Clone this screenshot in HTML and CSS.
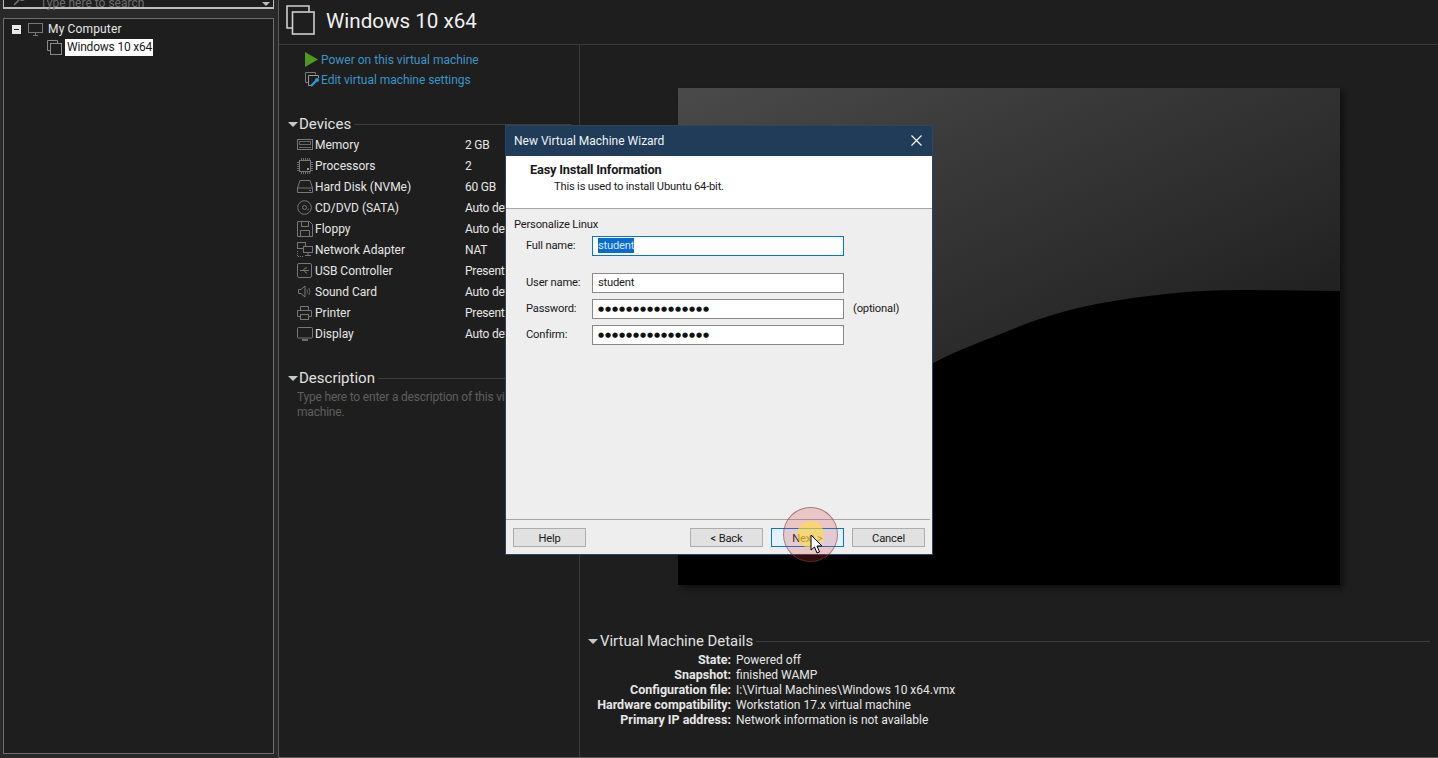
FILE: index.html
```html
<!DOCTYPE html>
<html lang="en">
<head>
    <meta charset="UTF-8">
    <title>Windows 10 x64 - VMware Workstation</title>
    <link rel="stylesheet" href="styles.css">
</head>
<body>
    <aside class="sidebar">
        <div class="search">
            <svg class="search-icon" width="16" height="12" viewBox="0 0 16 12"><circle cx="10" cy="1" r="4.5" fill="none" stroke="#777"/><path d="M7 5 L2 10" stroke="#777" stroke-width="1.5"/></svg>
            <span class="search-text">Type here to search</span>
            <span class="search-arrow"></span>
        </div>
        <div class="tree">
            <div class="tree-row">
                <span class="expander"></span>
                <svg class="tree-pc" width="15" height="13" viewBox="0 0 15 13"><rect x="0.5" y="0.5" width="14" height="9" fill="none" stroke="#777"/><path d="M5 12.5 H10 M7.5 10 V12" stroke="#777"/></svg>
                <span class="tree-label">My Computer</span>
            </div>
            <div class="tree-row child">
                <svg width="15" height="15" viewBox="0 0 15 15"><path d="M3.5 10.5 H0.5 V0.5 H10.5 V3.5" fill="none" stroke="#8a8a8a"/><rect x="3.5" y="3.5" width="11" height="11" fill="none" stroke="#8a8a8a"/></svg>
                <span class="tree-selected">Windows 10 x64</span>
            </div>
        </div>
    </aside>

    <main class="main">
        <header class="vm-header">
            <svg width="29" height="30" viewBox="0 0 29 30"><path d="M6.5 23 H1 V1 H23 V6.5" fill="none" stroke="#cfcfcf" stroke-width="1.6"/><rect x="6.5" y="7" width="21.5" height="22" fill="none" stroke="#cfcfcf" stroke-width="1.6"/></svg>
            <h1>Windows 10 x64</h1>
        </header>
        <div class="vm-body">
            <section class="summary">
                <div class="action">
                    <svg width="13" height="15" viewBox="0 0 13 15"><path d="M0 0 L13 7.5 L0 15 Z" fill="#4f9a1c"/></svg>
                    <a>Power on this virtual machine</a>
                </div>
                <div class="action second">
                    <svg width="15" height="15" viewBox="0 0 15 15"><path d="M3 10.5 H0.5 V0.5 H10.5 V2.5" fill="none" stroke="#777"/><path d="M6 13.5 H3.5 V3.5 H13.5 V6" fill="none" stroke="#999"/><path d="M6 14 L11 9" stroke="#2c9bd6" stroke-width="2.4"/><circle cx="12" cy="8" r="2" fill="#2c9bd6"/></svg>
                    <a>Edit virtual machine settings</a>
                </div>

                <h2 class="section-head devices"><span class="caret"></span><span>Devices</span></h2>
                <ul class="devices-list">
                    <li>
                        <svg viewBox="0 0 16 12" width="16" height="12"><rect x="0.5" y="0.5" width="15" height="10" fill="none" stroke="#777"/><rect x="2.5" y="2.5" width="11" height="3" fill="none" stroke="#666"/><path d="M2 8.5 H14" stroke="#666"/></svg>
                        <span class="dev-name">Memory</span><span class="dev-value">2 GB</span>
                    </li>
                    <li>
                        <svg viewBox="0 0 16 16" width="16" height="16"><rect x="2.5" y="2.5" width="11" height="11" fill="none" stroke="#777"/><path d="M4.5 0 V2 M6.5 0 V2 M8.5 0 V2 M10.5 0 V2 M12.5 0 V2 M4.5 14 V16 M6.5 14 V16 M8.5 14 V16 M10.5 14 V16 M12.5 14 V16 M0 4.5 H2 M0 6.5 H2 M0 8.5 H2 M0 10.5 H2 M0 12.5 H2 M14 4.5 H16 M14 6.5 H16 M14 8.5 H16 M14 10.5 H16 M14 12.5 H16" stroke="#6a6a6a"/><rect x="10" y="10" width="2" height="2" fill="#999"/></svg>
                        <span class="dev-name">Processors</span><span class="dev-value">2</span>
                    </li>
                    <li>
                        <svg viewBox="0 0 16 13" width="16" height="13"><path d="M3 0.5 H13 L15.5 8 V12.5 H0.5 V8 Z M0.5 8 H15.5" fill="none" stroke="#777"/><path d="M12 10.5 H14" stroke="#777"/></svg>
                        <span class="dev-name">Hard Disk (NVMe)</span><span class="dev-value">60 GB</span>
                    </li>
                    <li>
                        <svg viewBox="0 0 15 15" width="15" height="15"><circle cx="7.5" cy="7.5" r="6.8" fill="none" stroke="#777"/><circle cx="7.5" cy="7.5" r="2" fill="none" stroke="#777"/><path d="M10 10 L12 9" stroke="#666"/></svg>
                        <span class="dev-name">CD/DVD (SATA)</span><span class="dev-value">Auto detect</span>
                    </li>
                    <li>
                        <svg viewBox="0 0 16 16" width="16" height="16"><path d="M0.5 0.5 H12.5 L15.5 3.5 V15.5 H0.5 Z" fill="none" stroke="#777"/><path d="M4.5 0.5 V5.5 H11.5 V0.5 M3.5 15.5 V9.5 H12.5 V15.5" fill="none" stroke="#777"/></svg>
                        <span class="dev-name">Floppy</span><span class="dev-value">Auto detect</span>
                    </li>
                    <li>
                        <svg viewBox="0 0 16 15" width="16" height="15"><rect x="0.5" y="0.5" width="8" height="6" fill="none" stroke="#777"/><rect x="6.5" y="4.5" width="9" height="6" fill="#1e1e1e" stroke="#777"/><path d="M11 11 V13 M8 13.5 H14" stroke="#777"/><path d="M0.5 9 V14.5 H6" fill="none" stroke="#777" stroke-dasharray="1 1"/></svg>
                        <span class="dev-name">Network Adapter</span><span class="dev-value">NAT</span>
                    </li>
                    <li>
                        <svg viewBox="0 0 15 15" width="15" height="15"><rect x="0.5" y="0.5" width="14" height="14" rx="1.5" fill="none" stroke="#777"/><path d="M3 7.5 H12 M6 7.5 L8 5 H10 M7 7.5 L9 10 H10" fill="none" stroke="#777"/></svg>
                        <span class="dev-name">USB Controller</span><span class="dev-value">Present</span>
                    </li>
                    <li>
                        <svg viewBox="0 0 15 13" width="15" height="13"><path d="M1.5 4.5 H4 L8 1 V12 L4 8.5 H1.5 Z" fill="none" stroke="#777"/><path d="M10 4.5 Q11 6.5 10 8.5 M12 3 Q13.5 6.5 12 10" fill="none" stroke="#666"/></svg>
                        <span class="dev-name">Sound Card</span><span class="dev-value">Auto detect</span>
                    </li>
                    <li>
                        <svg viewBox="0 0 15 14" width="15" height="14"><path d="M3.5 4.5 V0.5 H11.5 V4.5" fill="none" stroke="#777"/><path d="M3 10.5 H0.5 V4.5 H14.5 V10.5 H12" fill="none" stroke="#777"/><rect x="3.5" y="8.5" width="8" height="5" fill="none" stroke="#777"/></svg>
                        <span class="dev-name">Printer</span><span class="dev-value">Present</span>
                    </li>
                    <li>
                        <svg viewBox="0 0 16 14" width="16" height="14"><rect x="0.5" y="0.5" width="15" height="10.5" rx="1" fill="none" stroke="#777"/><path d="M5 13 H11" stroke="#888" stroke-width="1.5"/></svg>
                        <span class="dev-name">Display</span><span class="dev-value">Auto detect</span>
                    </li>
                </ul>

                <h2 class="section-head description"><span class="caret"></span><span>Description</span></h2>
                <p class="description-text">Type here to enter a description of this virtual machine.</p>
            </section>

            <section class="preview-pane">
                <div class="preview">
                    <svg class="wave" width="662" height="497" viewBox="0 0 662 497"><path d="M0 330 L200 330 Q225 295 255 275 C280 262 300 255 325 245 C360 230 400 218 442 212 C480 206 520 202 560 202 L662 203 V497 H0 Z" fill="#000"/></svg>
                </div>
                <h2 class="section-head details-head"><span class="caret"></span><span>Virtual Machine Details</span></h2>
                <dl class="details">
                    <dt>State:</dt><dd>Powered off</dd>
                    <dt>Snapshot:</dt><dd>finished WAMP</dd>
                    <dt>Configuration file:</dt><dd>I:\Virtual Machines\Windows 10 x64.vmx</dd>
                    <dt>Hardware compatibility:</dt><dd>Workstation 17.x virtual machine</dd>
                    <dt>Primary IP address:</dt><dd>Network information is not available</dd>
                </dl>
            </section>
        </div>
    </main>

    <div class="wizard">
        <div class="wizard-title">
            <span>New Virtual Machine Wizard</span>
            <svg width="11" height="11" viewBox="0 0 11 11"><path d="M0.5 0.5 L10.5 10.5 M10.5 0.5 L0.5 10.5" stroke="#fff" stroke-width="1.1"/></svg>
        </div>
        <div class="wizard-top">
            <div class="wizard-heading">Easy Install Information</div>
            <div class="wizard-sub">This is used to install Ubuntu 64-bit.</div>
        </div>
        <div class="wizard-body">
            <div class="group-label">Personalize Linux</div>
            <div class="field focused"><label>Full name:</label><div class="input"><span class="selected">student</span></div></div>
            <div class="field spaced"><label>User name:</label><div class="input">student</div></div>
            <div class="field"><label>Password:</label><div class="input dots">●●●●●●●●●●●●●●●●</div><span class="optional">(optional)</span></div>
            <div class="field"><label>Confirm:</label><div class="input dots">●●●●●●●●●●●●●●●●</div></div>
        </div>
        <div class="wizard-footer">
            <button class="btn">Help</button>
            <button class="btn back">&lt; Back</button>
            <button class="btn primary">Next &gt;</button>
            <button class="btn">Cancel</button>
        </div>
    </div>

    <div class="click-ring"><div class="click-dot"></div></div>
    <svg class="cursor" width="13" height="21" viewBox="0 0 13 21"><path d="M1 1 V16 L4.5 13 L7 19 L9.5 18 L7 12 H12 Z" fill="#fff" stroke="#000"/></svg>
</body>
</html>
```

FILE: styles.css
```css
* {
    box-sizing: border-box;
}

body {
    margin: 0;
    width: 1438px;
    height: 758px;
    overflow: hidden;
    display: flex;
    background: #292929;
    color: #e6e6e6;
    font-family: Roboto, "Noto Sans", sans-serif;
    font-size: 12px;
}

/* left tree */
.sidebar {
    width: 278px;
    flex: none;
    padding: 0 4px 4px 3px;
    display: flex;
    flex-direction: column;
}

.search {
    height: 21px;
    margin-top: -12px;
    flex: none;
    display: flex;
    align-items: flex-end;
    position: relative;
    background: #1e1e1e;
    border: 1px solid #bdbdbd;
    border-top: none;
    border-bottom-width: 2px;
    padding-left: 36px;
    color: #6e6e6e;
}

.search-icon {
    position: absolute;
    left: 8px;
    bottom: 0;
}

.search-text {
    line-height: 14px;
    margin-bottom: -3px;
}

.search-arrow {
    position: absolute;
    right: 3px;
    bottom: 1px;
    border-left: 4px solid transparent;
    border-right: 4px solid transparent;
    border-top: 4px solid #bbb;
}

.tree {
    flex: 1;
    margin-top: 9px;
    background: #1e1e1e;
    border: 1px solid #6e6e6e;
    padding: 1px 0 0 8px;
}

.tree-row {
    display: flex;
    align-items: center;
    height: 18px;
}

.expander {
    width: 9px;
    height: 9px;
    background: #e8e8e8;
    position: relative;
    margin-right: 7px;
}

.expander::after {
    content: "";
    position: absolute;
    left: 2px;
    right: 2px;
    top: 4px;
    height: 1px;
    background: #222;
}

.tree-pc {
    margin-right: 5px;
}

.tree-label {
    letter-spacing: 0.15px;
}

.tree-row.child {
    padding-left: 35px;
}

.tree-row.child svg {
    margin-right: 3px;
}

.tree-selected {
    background: #fff;
    color: #1a1a1a;
    padding: 0 1px 0 2px;
    line-height: 17px;
    letter-spacing: -0.2px;
}

/* main area */
.main {
    flex: 1;
    display: flex;
    flex-direction: column;
    background: #1e1e1e;
    border-left: 1px solid #5a5a5a;
    border-bottom: 1px solid #5a5a5a;
    min-width: 0;
}

.vm-header {
    height: 45px;
    flex: none;
    display: flex;
    align-items: flex-start;
    padding: 5px 0 0 7px;
    border-bottom: 1px solid #3a3a3a;
}

.vm-header h1 {
    margin: 0 0 0 11px;
    font-size: 20.6px;
    font-weight: 400;
    line-height: 32px;
    color: #f0f0f0;
}

.vm-body {
    flex: 1;
    display: flex;
    min-height: 0;
}

.summary {
    width: 301px;
    flex: none;
    padding: 7px 8px 0 9px;
    border-right: 1px solid #3a3a3a;
    overflow: hidden;
}

.action {
    display: flex;
    align-items: center;
    height: 15px;
    padding-left: 17px;
    gap: 3px;
    color: #3a95c8;
}

.action.second {
    margin-top: 5px;
    gap: 1px;
    letter-spacing: -0.05px;
}

.section-head {
    margin: 0;
    display: flex;
    align-items: center;
    height: 18px;
    font-size: 15px;
    font-weight: 400;
    color: #e0e0e0;
}

.section-head::after {
    content: "";
    flex: 1;
    height: 1px;
    background: #3c3c3c;
    margin-left: 3px;
}

.caret {
    width: 0;
    height: 0;
    border-left: 5px solid transparent;
    border-right: 5px solid transparent;
    border-top: 5px solid #c8c8c8;
    margin-right: 1px;
}

.devices {
    margin-top: 28px;
}

.devices-list {
    list-style: none;
    margin: 1px 0 0 9px;
    padding: 0;
}

.devices-list li {
    display: grid;
    grid-template-columns: 18px 150px auto;
    align-items: center;
    height: 21px;
}

.dev-value {
    white-space: nowrap;
    letter-spacing: -0.2px;
}

.description {
    margin-top: 25px;
}

.description-text {
    margin: 3px 0 0 9px;
    width: 275px;
    line-height: 15px;
    letter-spacing: -0.2px;
    color: #5f5f5f;
}

/* right side */
.preview-pane {
    flex: 1;
    min-width: 0;
    padding: 43px 8px 0 8px;
}

.preview {
    width: 662px;
    height: 497px;
    margin-left: 90px;
    background: linear-gradient(155deg, #4a4a4a 0%, #393939 25%, #2a2a2a 50%, #1c1c1c 70%);
    box-shadow: 4px 4px 6px rgba(0, 0, 0, 0.45);
}

.wave {
    display: block;
}

.details-head {
    margin-top: 47px;
    font-size: 14.9px;
}

.details-head .caret {
    margin-right: 2px;
}

.details {
    margin: 2px 0 0;
    display: grid;
    grid-template-columns: 143px 1fr;
    column-gap: 5px;
    grid-auto-rows: 15px;
    line-height: 15px;
}

.details dt {
    text-align: right;
    font-size: 12.5px;
    font-weight: 700;
    white-space: nowrap;
}

.details dd {
    margin: 0;
    padding-top: 1px;
}

/* wizard window */
.wizard {
    position: absolute;
    left: 505px;
    top: 125px;
    width: 428px;
    height: 430px;
    display: flex;
    flex-direction: column;
    background: #eeeeee;
    border: 1px solid #2b4660;
    color: #1a1a1a;
    font-size: 11.2px;
    letter-spacing: -0.2px;
}

.wizard-title {
    height: 30px;
    flex: none;
    background: #203c58;
    color: #eef2f5;
    display: flex;
    align-items: center;
    justify-content: space-between;
    padding: 0 10px 1px 8px;
    font-size: 12px;
    letter-spacing: 0;
}

.wizard-top {
    height: 53px;
    flex: none;
    background: #fff;
    border-bottom: 1px solid #a6a6a6;
    padding: 7px 0 0 24px;
}

.wizard-heading {
    font-size: 12.8px;
    font-weight: 700;
    line-height: 14px;
}

.wizard-sub {
    margin: 2px 0 0 24px;
    line-height: 15px;
}

.wizard-body {
    flex: 1;
    padding: 8px 0 0 8px;
}

.group-label {
    line-height: 15px;
}

.field {
    display: flex;
    align-items: center;
    height: 20px;
    margin-top: 6px;
    padding-left: 12px;
}

.field.focused {
    margin-top: 4px;
}

.field.spaced {
    margin-top: 17px;
}

.field label {
    width: 66px;
    flex: none;
    padding-bottom: 1px;
}

.input {
    width: 252px;
    height: 20px;
    flex: none;
    background: #fff;
    border: 1px solid #8a8a8a;
    padding-left: 5px;
    line-height: 18px;
}

.focused .input {
    border-color: #0078d7;
}

.selected {
    background: #0a6ccc;
    color: #d6e6f6;
    display: inline-block;
    line-height: 15px;
}

.dots {
    font-family: "DejaVu Sans", sans-serif;
    font-size: 7px;
    line-height: 19px;
    letter-spacing: 0.9px;
    color: #111;
}

.optional {
    margin-left: 9px;
    padding-bottom: 1px;
}

.wizard-footer {
    height: 35px;
    flex: none;
    display: flex;
    gap: 8px;
    border-top: 1px solid #a6a6a6;
    margin-right: 2px;
    padding: 8px 5px 0 7px;
}

.btn {
    width: 73px;
    height: 19px;
    padding: 1px 0 0;
    background: #e1e1e1;
    border: 1px solid #adadad;
    font: inherit;
    letter-spacing: inherit;
    color: #1a1a1a;
}

.btn.back {
    margin-left: auto;
}

.btn.primary {
    background: #e5f1fb;
    border-color: #0078d7;
}

/* click highlight from the screen recorder */
.click-ring {
    position: absolute;
    left: 783px;
    top: 507px;
    width: 55px;
    height: 55px;
    border-radius: 50%;
    background: rgba(225, 60, 60, 0.22);
    border: 1px solid rgba(120, 60, 60, 0.55);
    display: flex;
    align-items: center;
    justify-content: center;
}

.click-dot {
    width: 27px;
    height: 27px;
    border-radius: 50%;
    background: rgba(255, 225, 60, 0.6);
}

.cursor {
    position: absolute;
    left: 810px;
    top: 534px;
}
```
